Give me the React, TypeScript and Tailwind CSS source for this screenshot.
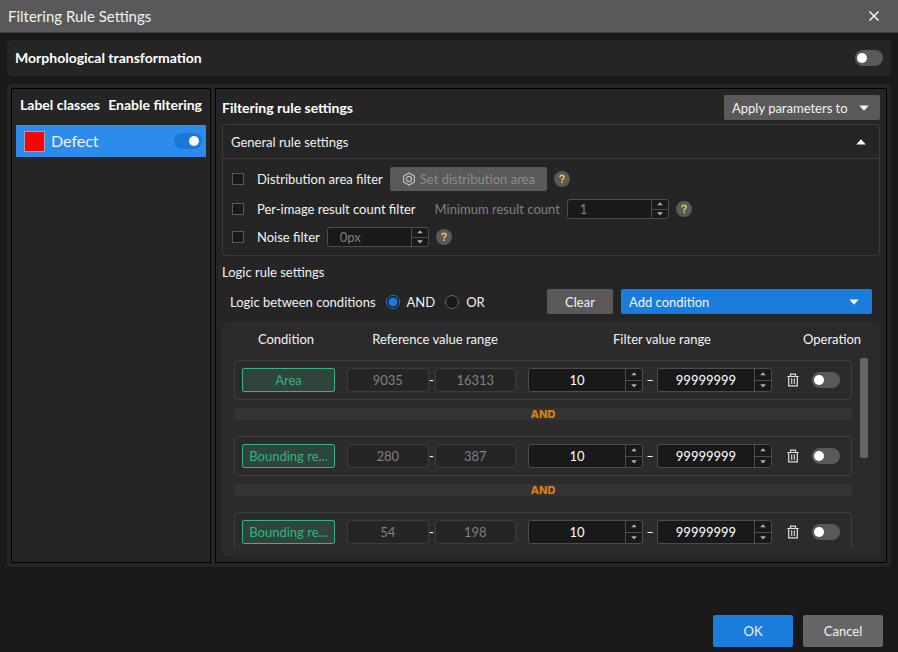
import { useId, useState } from 'react';
import clsx from 'clsx';

interface Condition {
  id: number;
  name: string;
  refMin: number;
  refMax: number;
  min: number;
  max: number;
}

const CONDITIONS: Condition[] = [
  { id: 1, name: 'Area', refMin: 9035, refMax: 16313, min: 10, max: 99999999 },
  { id: 2, name: 'Bounding re...', refMin: 280, refMax: 387, min: 10, max: 99999999 },
  { id: 3, name: 'Bounding re...', refMin: 54, refMax: 198, min: 10, max: 99999999 },
];

function Toggle({ label, defaultOn = false }: { label: string; defaultOn?: boolean }) {
  const [on, setOn] = useState(defaultOn);
  return (
    <button
      type="button"
      role="switch"
      aria-checked={on}
      aria-label={label}
      onClick={() => setOn(!on)}
      className={clsx(
        'flex h-4 w-7 shrink-0 items-center rounded-full',
        on ? 'justify-end bg-[#1a78d8] pr-[3px]' : 'justify-start bg-[#595959] pl-0.5'
      )}
    >
      <span className="size-[10px] rounded-full bg-white" />
    </button>
  );
}

function Caret({ up = false, className = 'w-[10px]' }: { up?: boolean; className?: string }) {
  return (
    <svg viewBox="0 0 10 6" className={className} fill="currentColor" aria-hidden="true">
      <path d={up ? 'M5 0.3 9.7 5.6H0.3z' : 'M0.3 0.4h9.4L5 5.7z'} />
    </svg>
  );
}

interface SpinBoxProps {
  label: string;
  value: string;
  disabled?: boolean;
  className?: string;
}

function SpinBox({ label, value, disabled = false, className }: SpinBoxProps) {
  return (
    <div className={clsx('flex overflow-hidden rounded-[3px] border border-[#4d4d4d] bg-[#191919]', className)}>
      <input
        type="text"
        inputMode="numeric"
        aria-label={label}
        defaultValue={value}
        disabled={disabled}
        className={clsx(
          'w-full min-w-0 flex-1 bg-transparent outline-none',
          disabled ? 'pl-3 text-[#808080]' : 'text-center text-white'
        )}
      />
      <div className="flex w-[17px] shrink-0 flex-col divide-y divide-[#4d4d4d] border-l border-[#4d4d4d] text-[#b0b0b0]">
        <button type="button" aria-label={`Increase ${label}`} disabled={disabled} className="flex flex-1 items-center justify-center">
          <Caret up className="w-[6px]" />
        </button>
        <button type="button" aria-label={`Decrease ${label}`} disabled={disabled} className="flex flex-1 items-center justify-center">
          <Caret className="w-[6px]" />
        </button>
      </div>
    </div>
  );
}

function HelpButton({ label }: { label: string }) {
  return (
    <button
      type="button"
      aria-label={label}
      className="flex size-4 shrink-0 items-center justify-center rounded-full bg-[#595959] text-[#f2c14e]"
    >
      <svg viewBox="0 0 16 16" className="size-4" fill="none" stroke="currentColor" strokeWidth="1.6" aria-hidden="true">
        <path d="M5.9 6.3C5.9 5 6.8 4.2 8 4.2s2.1.8 2.1 1.9c0 1.5-2 1.6-2 3.3" />
        <path d="M7.2 11.2h1.7" />
      </svg>
    </button>
  );
}

function FilterCheckbox({ label }: { label: string }) {
  const id = useId();
  return (
    <div className="flex items-center gap-[13px]">
      <input
        id={id}
        type="checkbox"
        className="size-3 appearance-none border border-[#595959] bg-[#191919] checked:bg-[#1a7cdc]"
      />
      <label htmlFor={id}>{label}</label>
    </div>
  );
}

function LogicRadio({ label, defaultChecked = false }: { label: string; defaultChecked?: boolean }) {
  return (
    <label className="flex items-center gap-[7px]">
      <input
        type="radio"
        name="logic"
        defaultChecked={defaultChecked}
        className="size-[14px] appearance-none rounded-full border border-[#666] bg-[#191919] checked:border-[#1a7cdc] checked:bg-[radial-gradient(circle,#1a7cdc_4px,#191919_5px)]"
      />
      {label}
    </label>
  );
}

function HexIcon() {
  return (
    <svg viewBox="0 0 14 14" className="size-[14px] text-[#bfbfbf]" fill="none" stroke="currentColor" strokeWidth="1.2" aria-hidden="true">
      <path d="M7 .9 12.4 3.9v6.2L7 13.1 1.6 10.1V3.9z" strokeLinejoin="round" />
      <circle cx="7" cy="7" r="2.6" />
    </svg>
  );
}

function TrashIcon() {
  return (
    <svg viewBox="0 0 12 14" className="h-[14px] w-3" fill="none" stroke="currentColor" aria-hidden="true">
      <path d="M.3 3.5h11.4M3.5 3.2V1.1h5v2.1M1.7 3.5v9.4h8.6V3.5" strokeWidth="1.2" />
      <path d="M4.7 5.2v5.8M7.3 5.2v5.8" strokeWidth="1.1" />
    </svg>
  );
}

function ConditionRow({ condition }: { condition: Condition }) {
  const { name, refMin, refMax, min, max } = condition;
  return (
    <div className="grid h-10 shrink-0 grid-cols-[93px_169fr_244fr_60px] items-center gap-3 rounded-[3px] border border-[#3f3f3f] px-[7px]">
      <div className="h-6 truncate rounded-xs border border-[#36b37e] bg-[#2f443c] text-center leading-[22px] text-[#36b37e]">
        {name}
      </div>
      <div className="flex min-w-0 items-center">
        <output className="h-6 min-w-0 flex-1 rounded-[3px] border border-[#3d3d3d] bg-[#252525] text-center leading-[22px] text-[#808080]">{refMin}</output>
        <span className="w-[6px] text-center text-white">-</span>
        <output className="h-6 min-w-0 flex-1 rounded-[3px] border border-[#3d3d3d] bg-[#252525] text-center leading-[22px] text-[#808080]">{refMax}</output>
      </div>
      <div className="flex min-w-0 items-center">
        <SpinBox label={`${name} minimum`} value={String(min)} className="h-6 min-w-0 flex-1" />
        <span className="w-[14px] text-center text-white">–</span>
        <SpinBox label={`${name} maximum`} value={String(max)} className="h-6 min-w-0 flex-1" />
      </div>
      <div className="flex items-center justify-between pr-1 pl-[3px]">
        <button type="button" aria-label={`Delete ${name}`} className="text-[#e0e0e0]">
          <TrashIcon />
        </button>
        <Toggle label={`Enable ${name}`} />
      </div>
    </div>
  );
}

export default function App() {
  return (
    <div className="flex min-h-screen flex-col bg-[#191919] font-['Lato','Noto_Sans_CJK_SC',sans-serif] text-[13px] leading-5 text-[#f2f2f2]">
      {/* Title bar */}
      <header className="flex h-[33px] items-center justify-between border-b border-[#3a3a3a] bg-[#595959] pr-[19px] pl-2">
        <h1 className="text-[15px]">Filtering Rule Settings</h1>
        <button type="button" aria-label="Close" className="text-white">
          <svg viewBox="0 0 10 10" className="size-[10px]" stroke="currentColor" strokeWidth="1.4" aria-hidden="true">
            <path d="M.5.5l9 9M9.5.5l-9 9" />
          </svg>
        </button>
      </header>

      <main className="flex flex-col gap-2 px-[7px] pt-[7px]">
        <section className="flex h-9 items-center justify-between rounded bg-[#252525] px-2">
          <h2 className="text-[14px] font-bold text-white">Morphological transformation</h2>
          <Toggle label="Morphological transformation" />
        </section>

        <div className="flex gap-1 rounded bg-[#252525] p-1">
          {/* Label classes */}
          <aside className="w-[200px] shrink-0 border border-black px-1 pt-[6px]">
            <div className="flex justify-between px-1 text-[14px] font-bold whitespace-nowrap text-white">
              <h2>Label classes</h2>
              <h2>Enable filtering</h2>
            </div>
            <div className="mt-[10px] flex h-8 items-center bg-[#2d8ceb] pr-1 pl-2">
              <span className="size-[21px] border border-[#a6a6a6] bg-[#ff0000]" />
              <span className="ml-[6px] flex-1 text-[16px]">Defect</span>
              <Toggle label="Enable filtering for Defect" defaultOn />
            </div>
          </aside>

          {/* Rules */}
          <section className="min-w-0 flex-1 border border-black px-[6px] py-[6px]">
            <div className="flex items-center justify-between">
              <h2 className="text-[14px] font-bold text-white">Filtering rule settings</h2>
              <button type="button" className="flex h-[25px] min-w-[156px] items-center justify-between gap-2 rounded-xs bg-[#595959] pr-[11px] pl-2">
                Apply parameters to
                <Caret />
              </button>
            </div>

            <div className="mt-1 rounded-[3px] border border-[#3a3a3a]">
              <div className="flex h-[34px] items-center justify-between border-b border-[#3a3a3a] pr-[13px] pl-2">
                <h3>General rule settings</h3>
                <button type="button" aria-label="Collapse general rule settings" className="text-white">
                  <Caret up />
                </button>
              </div>
              <div className="flex flex-col gap-2 py-2 pl-[9px]">
                <div className="flex items-center gap-[7px]">
                  <FilterCheckbox label="Distribution area filter" />
                  <button type="button" disabled className="flex h-6 items-center gap-1 rounded-xs bg-[#595959] px-3 text-[#8c8c8c]">
                    <HexIcon />
                    Set distribution area
                  </button>
                  <HelpButton label="About distribution area filter" />
                </div>
                <div className="flex items-center gap-[7px]">
                  <FilterCheckbox label="Per-image result count filter" />
                  <span className="ml-3 text-[#808080]">Minimum result count</span>
                  <SpinBox label="Minimum result count" value="1" disabled className="h-5 w-[102px]" />
                  <HelpButton label="About per-image result count filter" />
                </div>
                <div className="flex items-center gap-[7px]">
                  <FilterCheckbox label="Noise filter" />
                  <SpinBox label="Noise filter size" value="0px" disabled className="h-5 w-[102px]" />
                  <HelpButton label="About noise filter" />
                </div>
              </div>
            </div>

            <h3 className="mt-[6px]">Logic rule settings</h3>
            <div className="mt-[7px] flex items-center gap-2 px-2">
              <div role="radiogroup" aria-label="Logic between conditions" className="flex flex-1 items-center gap-[10px]">
                <span>Logic between conditions</span>
                <LogicRadio label="AND" defaultChecked />
                <LogicRadio label="OR" />
              </div>
              <button type="button" className="h-[25px] w-[66px] rounded-xs bg-[#595959]">Clear</button>
              <button type="button" className="flex h-[25px] w-[251px] items-center justify-between rounded-xs bg-[#1a7cdc] pr-[13px] pl-2">
                Add condition
                <Caret />
              </button>
            </div>

            <div className="mt-2 rounded bg-[#2b2b2b] pb-2">
              <div className="grid grid-cols-[104px_194fr_260fr_80px] pt-[7px] pr-2 pb-[9px] pl-3 text-center">
                <span>Condition</span>
                <span>Reference value range</span>
                <span>Filter value range</span>
                <span>Operation</span>
              </div>
              <div className="flex h-[190px] gap-2 pr-3 pl-3">
                <div className="flex min-w-0 flex-1 flex-col overflow-hidden pt-0.5">
                  {CONDITIONS.map((condition, i) => (
                    <div key={condition.id} className="shrink-0">
                      {i > 0 && (
                        <div className="mt-2 mb-4 h-3 rounded-xs bg-[#333335] text-center font-['Inter',sans-serif] text-[11px] leading-3 font-extrabold text-[#d9800f]">
                          AND
                        </div>
                      )}
                      <ConditionRow condition={condition} />
                    </div>
                  ))}
                </div>
                <div className="h-[100px] w-2 rounded-xs bg-[#666]" />
              </div>
            </div>
          </section>
        </div>
      </main>

      <footer className="mt-auto flex justify-end gap-[10px] pr-[15px] pb-[5px]">
        <button type="button" className="h-8 w-20 rounded-xs bg-[#1a7cdc]">OK</button>
        <button type="button" className="h-8 w-20 rounded-xs bg-[#666]">Cancel</button>
      </footer>
    </div>
  );
}
